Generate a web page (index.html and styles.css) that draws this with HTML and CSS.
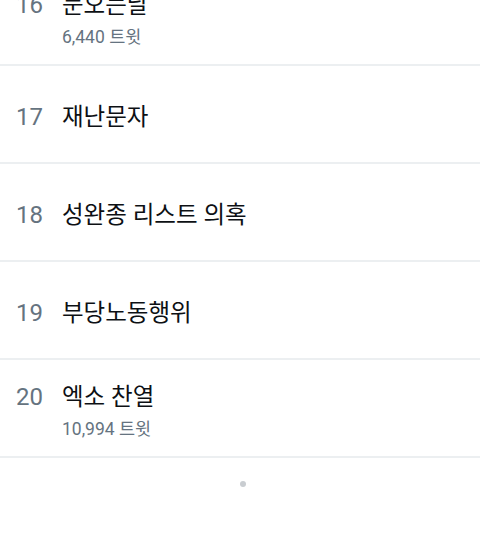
FILE: index.html
```html
<!DOCTYPE html>
<html lang="ko">
<head>
<meta charset="utf-8">
<title>트렌드</title>
<link rel="stylesheet" href="styles.css">
</head>
<body>
<div class="list">
  <div class="row">
    <div class="entry">
      <span class="rank">16</span>
      <div class="info">
        <div class="title">눈오는날</div>
        <div class="sub">6,440 트윗</div>
      </div>
    </div>
  </div>
  <div class="row">
    <div class="entry">
      <span class="rank">17</span>
      <div class="info"><div class="title">재난문자</div></div>
    </div>
  </div>
  <div class="row">
    <div class="entry">
      <span class="rank">18</span>
      <div class="info"><div class="title">성완종 리스트 의혹</div></div>
    </div>
  </div>
  <div class="row">
    <div class="entry">
      <span class="rank">19</span>
      <div class="info"><div class="title">부당노동행위</div></div>
    </div>
  </div>
  <div class="row">
    <div class="entry">
      <span class="rank">20</span>
      <div class="info">
        <div class="title">엑소 찬열</div>
        <div class="sub">10,994 트윗</div>
      </div>
    </div>
  </div>
</div>
<div class="loader"><span class="dot"></span></div>
</body>
</html>
```
FILE: styles.css
```css
html, body {
  margin: 0;
  padding: 0;
  background: #ffffff;
  overflow: hidden;
}
body {
  width: 480px;
  height: 545px;
  font-family: Roboto, "Noto Sans CJK KR", sans-serif;
}
.list {
  margin-top: -32px;
}
.row {
  display: flex;
  align-items: center;
  box-sizing: border-box;
  height: 98px;
  padding-top: 5px;
  border-bottom: 2px solid #eceff1;
  padding-left: 16px;
}
.entry {
  display: flex;
  align-items: baseline;
}
.rank {
  width: 46px;
  flex: none;
  font-family: Roboto, sans-serif;
  font-size: 24px;
  line-height: 32px;
  color: #657380;
}
.info {
  display: flex;
  flex-direction: column;
  gap: 4px;
}
.title {
  font-family: Roboto, "Noto Sans CJK KR", sans-serif;
  font-size: 23.5px;
  font-weight: 400;
  line-height: 32px;
  color: #0d1014;
}
.sub {
  font-family: Roboto, "Noto Sans CJK KR", sans-serif;
  font-size: 17.5px;
  line-height: 24px;
  color: #657380;
}
.loader {
  display: flex;
  justify-content: center;
  padding-left: 6px;
  padding-top: 23px;
}
.dot {
  width: 6px;
  height: 6px;
  border-radius: 50%;
  background: #c9cdd1;
}
```
